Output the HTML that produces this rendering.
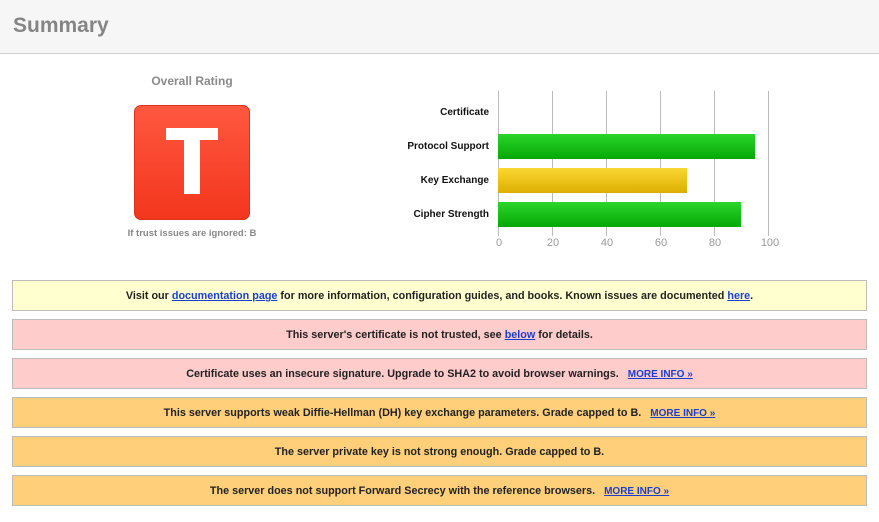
<!DOCTYPE html>
<html><head><style>
*{margin:0;padding:0;box-sizing:border-box}
body{width:879px;height:522px;background:#fff;font-family:"Liberation Sans",Arial,sans-serif;position:relative;overflow:hidden}
.hdr{position:absolute;left:0;top:0;width:879px;height:54px;background:#f6f6f6;border-bottom:1px solid #cfcfcf}
.hdr h1{position:absolute;left:13px;top:14px;font-size:21px;color:#858585;font-weight:bold}
.abs{position:absolute}
.lbl{position:absolute;right:390px;font-size:10px;font-weight:bold;color:#111;text-align:right;white-space:nowrap}
.grid{position:absolute;top:91px;width:1px;height:145px;background:#bbb}
.ax{position:absolute;top:237px;font-size:11px;color:#999;width:30px;text-align:center}
.bar{position:absolute;left:498px;height:25px}
.g{background:linear-gradient(#2ad52a,#06a806)}
.y{background:linear-gradient(#fbd733,#dcae02)}
.box{position:absolute;left:12px;width:855px;height:31px;border:1px solid #bdbdbd;font-size:10.8px;font-weight:bold;color:#222;text-align:center;line-height:30px}
.box a{color:#1a3fd0;text-decoration:underline}
.box a.m{font-size:10px;margin-left:6px}
.yl{background:#ffffd0}.pk{background:#ffcccc}.or{background:#ffcf7a}
</style></head><body>
<div class="hdr"><h1>Summary</h1></div>
<div class="abs" style="left:92px;top:74px;width:200px;text-align:center;font-size:12px;font-weight:bold;color:#8a8a8a">Overall Rating</div>
<div class="abs" style="left:134px;top:105px;width:116px;height:115px;border-radius:7px;background:linear-gradient(#ff5840,#f2361c);border:1px solid #e0301a"></div>
<div class="abs" style="left:166px;top:128px;width:52px;height:12px;background:#fff"></div>
<div class="abs" style="left:184px;top:128px;width:16px;height:66px;background:#fff"></div>
<div class="abs" style="left:92px;top:228px;width:200px;text-align:center;font-size:9.5px;font-weight:bold;color:#888">If trust issues are ignored: B</div>

<div class="grid" style="left:498px"></div>
<div class="grid" style="left:552px"></div>
<div class="grid" style="left:606px"></div>
<div class="grid" style="left:660px"></div>
<div class="grid" style="left:714px"></div>
<div class="grid" style="left:768px"></div>
<div class="bar g" style="top:134px;width:257px"></div>
<div class="bar y" style="top:168px;width:189px"></div>
<div class="bar g" style="top:202px;width:243px"></div>
<div class="lbl" style="top:107px">Certificate</div>
<div class="lbl" style="top:141px">Protocol Support</div>
<div class="lbl" style="top:175px">Key Exchange</div>
<div class="lbl" style="top:209px">Cipher Strength</div>
<div class="ax" style="left:484px">0</div>
<div class="ax" style="left:538px">20</div>
<div class="ax" style="left:592px">40</div>
<div class="ax" style="left:646px">60</div>
<div class="ax" style="left:700px">80</div>
<div class="ax" style="left:755px">100</div>

<div class="box yl" style="top:280px">Visit our <a>documentation page</a> for more information, configuration guides, and books. Known issues are documented <a>here</a>.</div>
<div class="box pk" style="top:319px">This server's certificate is not trusted, see <a>below</a> for details.</div>
<div class="box pk" style="top:358px">Certificate uses an insecure signature. Upgrade to SHA2 to avoid browser warnings. <a class="m">MORE INFO »</a></div>
<div class="box or" style="top:397px">This server supports weak Diffie-Hellman (DH) key exchange parameters. Grade capped to B. <a class="m">MORE INFO »</a></div>
<div class="box or" style="top:436px">The server private key is not strong enough. Grade capped to B.</div>
<div class="box or" style="top:475px">The server does not support Forward Secrecy with the reference browsers. <a class="m">MORE INFO »</a></div>
</body></html>
